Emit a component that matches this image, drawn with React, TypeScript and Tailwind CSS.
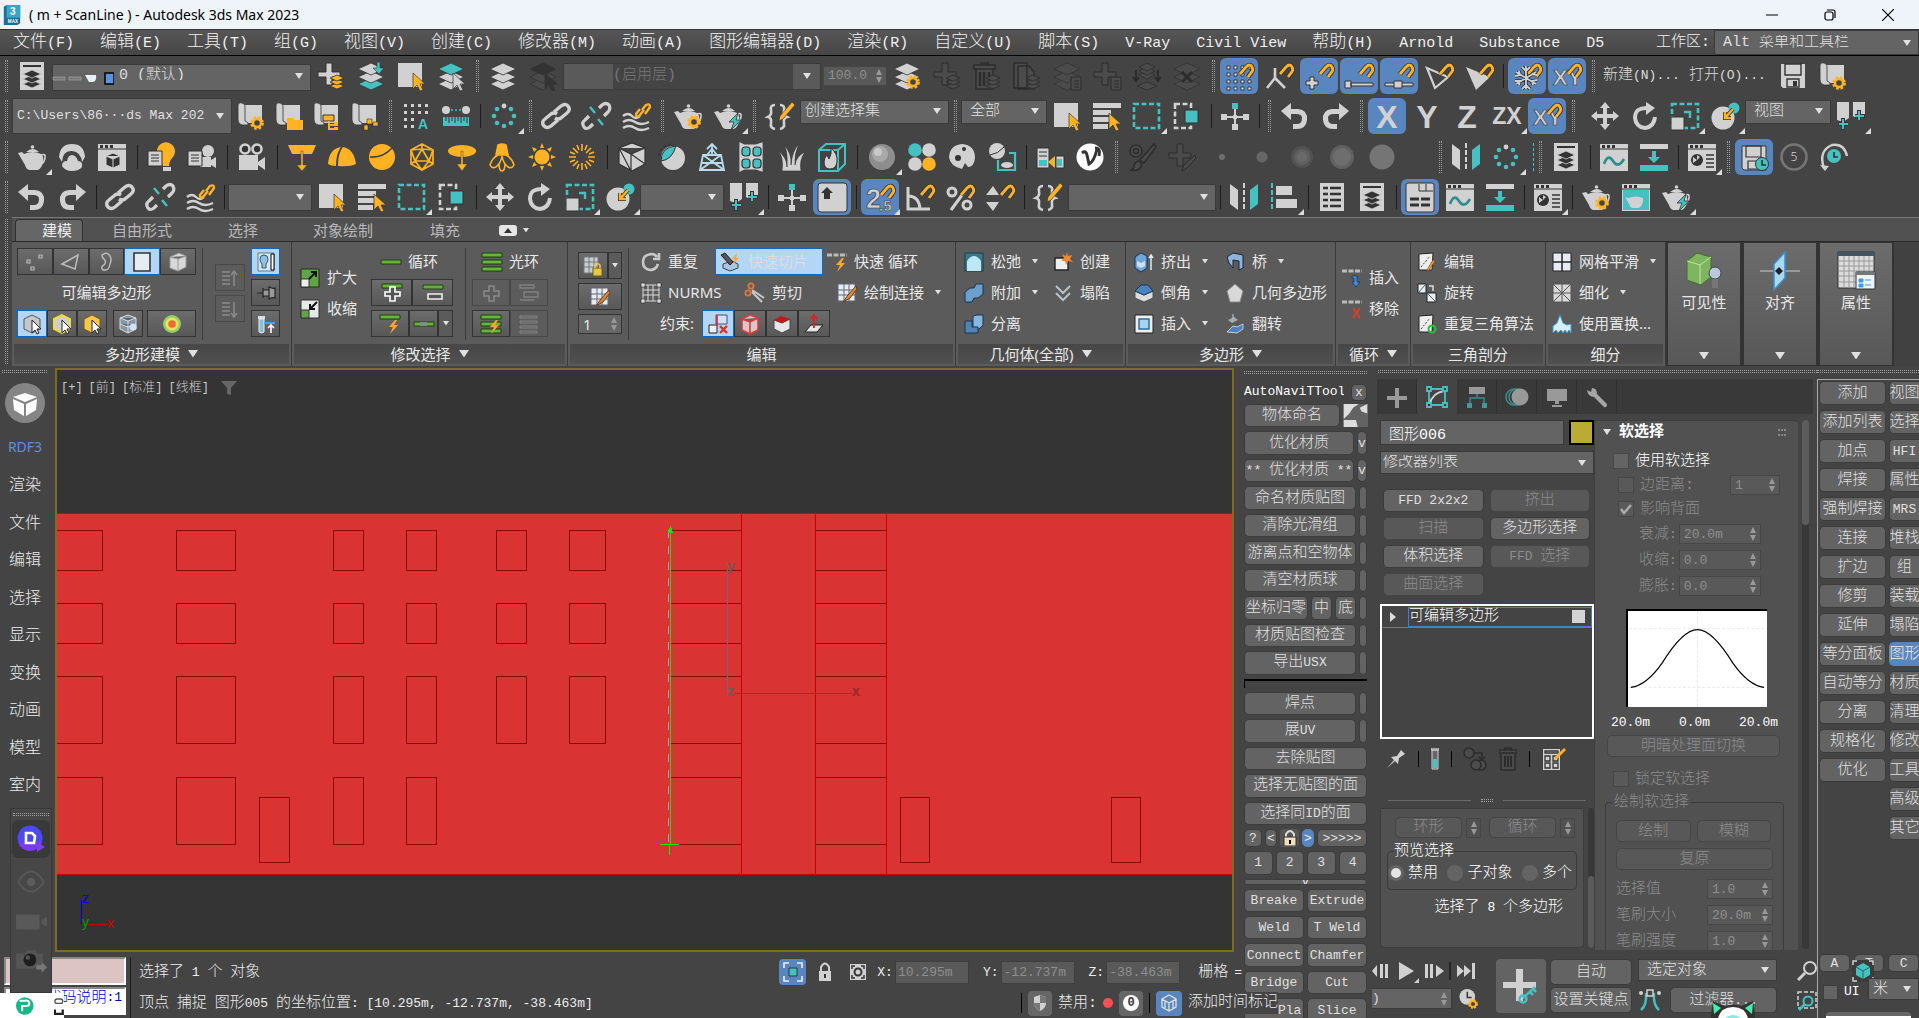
import { FC, ReactNode } from "react";

const G = "#d1d1d1";
const C = "#45c1c1";
const O = "#ffb322";
const D = "#333333";

const dia = (cx: number, cy: number, rx: number, ry: number, fill: string, stroke = D) => (
  <path d={`M${cx - rx} ${cy}L${cx} ${cy - ry}L${cx + rx} ${cy}L${cx} ${cy + ry}Z`} fill={fill} stroke={stroke} strokeWidth="0.8" />
);

const gear = (cx: number, cy: number, r = 4) => (
  <g>
    <circle cx={cx} cy={cy} r={r + 1.4} fill="none" stroke={O} strokeWidth="3" strokeDasharray="2.4 1.9" />
    <circle cx={cx} cy={cy} r={r} fill="#444" stroke={O} strokeWidth="2.4" />
  </g>
);

const stack = (fills: string[]) => (
  <g>
    {dia(14, 22, 13, 6, fills[2])}
    {dia(14, 15, 13, 6, fills[1])}
    {dia(14, 7, 13, 6, fills[0])}
  </g>
);

const miniStack = (fill: string, stroke: string) => (
  <g>
    {dia(20, 24, 7, 3, fill, stroke)}
    {dia(20, 20, 7, 3, fill, stroke)}
    {dia(20, 16, 7, 3, fill, stroke)}
  </g>
);

const plus = (fill: string, stroke: string) => (
  <path d="M9 1h6v9h8v5h-8v8H9v-8H1v-5h8z" fill={fill} stroke={stroke} strokeWidth="1" />
);

const cursor = (fill: string) => <path d="M16 11l12 11h-5l3 6-3 1-3-6-4 4z" fill={fill} stroke={D} strokeWidth="0.7" />;

const magnet = (
  <g fill="none">
    <path d="M15 12l6-7q4-4 6 0q2 3-1 6l-3 4" stroke={D} strokeWidth="4.6" />
    <path d="M15 12l6-7q4-4 6 0q2 3-1 6l-3 4" stroke={O} strokeWidth="2.8" />
  </g>
);

const pot = (
  <g fill={G}>
    <path d="M6 11q9-4 17 0q3 2 2 8q-1 6-5 8H11q-3-1-4-5L0 10l4-1z" />
    <path d="M8 9q7-6 13 0z" />
    <circle cx="14.500" cy="4" r="1.800" />
    <path d="M23 12q5-2 4 3q-1 5-4 6" fill="none" stroke={G} strokeWidth="1.600" />
  </g>
);

const bolt = <path d="M24 11l-9 9h5l-3 8 10-10h-5z" fill={C} stroke={D} strokeWidth="0.800" />;

const chain = (c = G) => (
  <g fill="none" stroke={c} strokeWidth="3.400">
    <path d="M12 10l7-6q4-3 7 0q3 4-1 7l-6 5q-3 2-6 0" />
    <path d="M16 18l-7 6q-4 3-7 0q-3-4 1-7l6-5q3-2 6 0" />
  </g>
);

const scroll = (
  <g>
    <path d="M8 3h17v18H8z" fill={G} />
    <path d="M1 4q0-4 4-3t3 4v14q4 1 3 4H5q-4-1-4-5z" fill={G} stroke={D} strokeWidth="0.800" />
  </g>
);

const braces = (
  <g>
    <path d="M9 3Q4 3 5 8T2 15Q6 16 5 21T9 27M14 3q5 0 4 5t3 7q-4 1-3 6t-4 6" fill="none" stroke={G} strokeWidth="2.600" />
    <path d="M26 0l3 3-12 14-4 2 1-5z" fill={O} stroke={D} strokeWidth="0.600" />
  </g>
);

const win = (
  <g>
    <path d="M0 1h28v27H0z" fill={G} />
    <path d="M0 6h28" stroke={D} strokeWidth="1" />
    <path d="M2 2h3v3H2zM7 2h3v3H7zM12 2h3v3h-3z" fill={D} />
  </g>
);

const ballRing = (
  <g fill={C}>
    <circle cx="14" cy="4" r="2.400" fill={G} />
    <circle cx="21" cy="7" r="2.300" />
    <circle cx="24" cy="14" r="2.300" />
    <circle cx="21" cy="21" r="2.300" />
    <circle cx="14" cy="24" r="2.300" />
    <circle cx="7" cy="21" r="2.300" />
    <circle cx="4" cy="14" r="2.300" />
    <circle cx="7" cy="7" r="2.300" />
  </g>
);

const waves = (
  <g>
    <path d="M1 14q5-4 9 0t8 0M1 20q6-4 12 0t14 0M1 26q6-4 12 0t14 0" fill="none" stroke={G} strokeWidth="2.400" />
    <path d="M20 8l4-5q4-2 4 2l-5 7M22 8l-5 6q-3 2-3-2l4-5" fill="none" stroke={O} strokeWidth="2.400" />
  </g>
);

const off = "#4b4b4b";
const offL = "#2c2c2c";

const axis = (t: string, size = 32) => (
  <text x="14" y={size > 30 ? 26 : 22} textAnchor="middle" fontSize={size} fontWeight="700" fontFamily="'Liberation Sans Narrow','Liberation Sans'" fill={G}>{t}</text>
);

const ICONS: Record<string, ReactNode> = {
  layerPanel: (
    <g>
      <path d="M2 0h24v28H2z" fill={G} />
      <path d="M5 3h18v2H5z" fill={D} />
      {dia(14, 22, 9, 4, D, G)}
      {dia(14, 17, 9, 4, D, G)}
      {dia(14, 12, 9, 4, D, G)}
    </g>
  ),
  addLayer: <g>{plus(G, D)}{miniStack(O, D)}</g>,
  layerDown: <g>{stack([G, G, C])}<path d="M20 0h3v6h4l-5 6-6-6h4z" fill={C} stroke={D} strokeWidth="0.600" /></g>,
  select: <g><path d="M1 1h24v24H1z" fill={G} />{cursor(O)}</g>,
  layerSel: <g>{stack([C, G, G])}{cursor(G)}</g>,
  layers: stack([G, G, G]),
  layersOff: <g>{stack(["#333", off, off])}{cursor("#333")}</g>,
  layerGear: <g>{stack([G, G, G])}{gear(20, 20)}</g>,
  plusOff: <g>{plus(off, offL)}{miniStack(off, offL)}</g>,
  trashOff: (
    <g fill={off} stroke={offL} strokeWidth="1.500">
      <path d="M3 7h17v20H3zM1 3h21v4H1zM8 1h7v2H8z" />
      <path d="M7 10v14M11 10v14M16 10v14" strokeWidth="2.500" />
      {miniStack(off, offL)}
    </g>
  ),
  docOff: <g fill={off} stroke={offL} strokeWidth="1.500"><path d="M1 1h13v25H1zM5 4h11l5 6v17H5z" />{miniStack(off, offL)}</g>,
  stackOff: <g>{stack([off, off, off])}<path d="M18 15h10v13H18zM21 19h5M21 22h5M21 25h5" fill={off} stroke={offL} /></g>,
  plusDocOff: <g>{plus(off, offL)}<path d="M18 15h10v13H18zM21 19h5M21 22h5M21 25h5" fill={off} stroke={offL} /></g>,
  splitOff: (
    <g>
      {dia(14, 24, 10, 4, off, offL)}
      {dia(14, 13, 8, 4, off, offL)}
      {dia(14, 9, 8, 4, off, offL)}
      {dia(14, 5, 8, 4, off, offL)}
      <path d="M3 8v10M0 15l3 4 3-4M25 8v10M22 15l3 4 3-4" stroke={offL} fill="none" strokeWidth="2" />
    </g>
  ),
  crossOff: <g>{stack([off, off, off])}<path d="M9 10l10 10M19 10L9 20" stroke={offL} strokeWidth="3" /></g>,
  snapGrid: (
    <g>
      <g fill="#fff" stroke={D} strokeWidth="1">
        {[5, 12, 19, 26].map((y) => [2, 9, 16, 23].map((x) => <path key={`${x}-${y}`} d={`M${x} ${y - 1}h3v3h-3z`} />))}
      </g>
      {magnet}
    </g>
  ),
  snapPivot: <g><path d="M10 6v10L2 26M10 16l10 10" stroke={G} strokeWidth="2.600" fill="none" />{magnet}</g>,
  snapPlus: <g><path d="M5 15h4v4h4v4H9v4H5v-4H1v-4h4z" fill={G} stroke={D} />{magnet}</g>,
  snapEnd: <g><path d="M0 19h6v7H0zM6 21h22v3H6z" fill={G} stroke={D} />{magnet}</g>,
  snapMid: <g><path d="M0 21h28v3H0z" fill={G} stroke={D} /><path d="M9 19h8v7H9z" fill={G} stroke={D} />{magnet}</g>,
  snapFace: <g><path d="M2 6l8 20 13-11z" stroke={G} strokeWidth="2.200" fill="none" />{magnet}</g>,
  snapFaceFull: <g><path d="M1 5l10 23 14-13z" fill={G} />{magnet}</g>,
  snow: (
    <g>
      {magnet}
      <path d="M13 4v23M3 10l20 12M23 10L3 22M9 5l4 4 4-4M9 27l4-4 4 4M2 14l5-1-1-4M24 18l-5 1 1 4M24 13l-5-1M2 19l5 0-1 4" stroke={D} strokeWidth="3.600" fill="none" />
      <path d="M13 4v23M3 10l20 12M23 10L3 22M9 5l4 4 4-4M9 27l4-4 4 4M2 14l5-1-1-4M24 18l-5 1 1 4M24 13l-5-1M2 19l5 0-1 4" stroke={G} strokeWidth="1.800" fill="none" />
    </g>
  ),
  xySnap: (
    <g>
      <text x="0" y="23" fontSize="22" fontWeight="700" fontFamily="'Liberation Sans Narrow','Liberation Sans'" fill={G} stroke={D} strokeWidth="0.600">XY</text>
      {magnet}
    </g>
  ),
  save: (
    <g>
      <path d="M2 2h24v24H4l-2-2z" fill={G} />
      <path d="M6 2h16v11H6zM8 17h12v8H8z" fill="none" stroke={D} strokeWidth="1.400" />
      <path d="M14 19h4v5h-4z" fill={D} />
    </g>
  ),
  scriptGear: <g>{scroll}{gear(20, 21)}</g>,
  scriptFolder: <g>{scroll}<path d="M12 16h6l2 2h8v10H12z" fill={O} /></g>,
  scriptTree: <g>{scroll}<path d="M10 13h11v6H10z" fill={O} stroke={D} /><path d="M16 19v8h6M16 23h6" stroke={O} strokeWidth="2" fill="none" /><path d="M21 20h4v4h-4zM21 25h4v3h-4z" fill={O} /></g>,
  scriptNodes: <g>{scroll}<path d="M16 17h5v5h-5zM22 20h5v4h-5zM13 23h4v5h-4z" fill={O} stroke={D} strokeWidth="0.600" /></g>,
  gridA: (
    <g>
      <g fill={G}>
        {[2, 9, 16, 23].map((y) => [2, 9, 16, 23].filter((x) => y < 16 || x < 16).map((x) => <path key={`${x}-${y}`} d={`M${x} ${y}h3v3h-3z`} />))}
      </g>
      <text x="16" y="27" fontSize="14" fontWeight="700" fontFamily="Liberation Sans" fill={C}>A</text>
    </g>
  ),
  ruler: (
    <g>
      <circle cx="4" cy="8" r="4" fill={G} />
      <circle cx="24" cy="8" r="4" fill={G} />
      <path d="M9 8h10" stroke={C} strokeWidth="1.500" strokeDasharray="2 2" />
      <path d="M1 15h26v9H1z" fill={C} />
      <path d="M4 15v4M7 15v6M10 15v4M13 15v6M16 15v4M19 15v6M22 15v4M25 15v6" stroke={D} />
    </g>
  ),
  ballRing,
  link: chain(),
  unlink: (
    <g fill="none" stroke={G} strokeWidth="3.200">
      <path d="M17 6l3-3q4-3 7 0q2 4-1 7l-4 4M11 22l-3 3q-4 3-6 0q-3-4 1-7l4-4" />
      <path d="M8 5l5 6M16 17l5 6" stroke={C} strokeWidth="2.400" />
    </g>
  ),
  waves,
  potGear: <g>{pot}{gear(20, 20)}</g>,
  potBolt: <g>{pot}{bolt}</g>,
  pot,
  braces,
  selectName: <g fill={G}><path d="M0 1h28v5H0zM0 8h18v5H0zM0 15h16v5H0zM0 22h15v5H0z" />{cursor(O)}</g>,
  region: <path d="M1 2h25v24H1z" fill="none" stroke={C} strokeWidth="2.600" strokeDasharray="5 2.500" />,
  windowSel: <g><path d="M2 2h16v24H2z" fill="none" stroke={G} strokeWidth="2.600" strokeDasharray="5 2.500" /><path d="M12 8h13v13H12z" fill={C} stroke={D} /></g>,
  nodes: <g><path d="M14 4v22M3 15h22" stroke={G} strokeWidth="2" /><path d="M11 1h6v6h-6z" fill={C} /><path d="M11 22h6v6h-6zM0 12h6v6H0zM22 12h6v6h-6zM12 13h4v4h-4z" fill={G} /></g>,
  undo: <path d="M0 9l10-8v6h7q10 1 9 11q-1 9-10 9h-4v-5h4q5 0 5-6q0-4-6-4h-5v6z" fill={G} />,
  redo: <path d="M28 9L18 1v6h-7Q1 8 2 18q1 9 10 9h4v-5h-4q-5 0-5-6q0-4 6-4h5v6z" fill={G} />,
  axisX: axis("X"),
  axisY: axis("Y"),
  axisZ: axis("Z"),
  axisZX: axis("ZX", 23),
  move: <path d="M14 0l5 6h-3v6h6V9l6 5-6 5v-3h-6v6h3l-5 6-5-6h3v-6H6v3l-6-5 6-5v3h6V6H9z" fill={G} />,
  rotate: <g><path d="M17 6Q4 5 4 16q1 9 10 10q9-1 10-11" fill="none" stroke={G} strokeWidth="4" /><path d="M15 0l9 6-9 7z" fill={G} /></g>,
  scale: <g><path d="M1 2h26v24H1z" fill="none" stroke={C} strokeWidth="2.600" strokeDasharray="5 2.500" /><path d="M0 15h13v13H0z" fill={G} stroke={D} /><path d="M13 10h6v6" fill="none" stroke={C} strokeWidth="2.400" /></g>,
  place: <g><circle cx="12" cy="16" r="11.500" fill={G} /><circle cx="23" cy="6" r="5.500" fill={C} /><path d="M22 7l-8 9M14 10v6h6" stroke={D} strokeWidth="4" fill="none" /><path d="M22 7l-8 9M14 10v6h6" stroke={O} strokeWidth="2.400" fill="none" /></g>,
  pivot: <g><path d="M0 0h12v16l-6 4-6-2zM16 0h12v12l-5 6-7-4z" fill={G} /><path d="M6 16v12M1 22h10M22 8v10M18 14h10" stroke={D} strokeWidth="4" /><path d="M6 17v10M2 22h9M22 9v9M18 14h9" stroke={C} strokeWidth="2" /></g>,
  cloth: <g fill={G}><path d="M1 14Q2 1 14 1T27 14l-3 5Q23 9 14 8T4 19z" /><path d="M4 23q0-5 5-5q1-6 5-6t6 6q5 0 4 6q-3 4-10 4T4 23z" /></g>,
  winCube: <g>{win}<path d="M8 13l7-3 7 3v9l-7 3-7-3zM8 13l7 3 7-3M15 16v9" fill={D} stroke={G} /></g>,
  lampList: <g><path d="M9 9a9 9 0 1 1 16 5q-4 4-4 9h-6z" fill={O} /><path d="M15 24h8v4h-8z" fill={G} /><path d="M0 8h14v15H0z" fill={G} stroke={D} /><path d="M3 12h8M3 15h8M3 18h8" stroke={D} /></g>,
  camList: <g><circle cx="20" cy="8" r="6" fill={G} /><path d="M12 14h11v10H12zM23 17l5-3v11l-5-3z" fill={G} /><path d="M0 8h14v15H0z" fill={G} stroke={D} /><path d="M3 12h8M3 15h8M3 18h8" stroke={D} /></g>,
  camera: <g><path d="M1 12h19v15H1zM20 19l7-5v13l-7-5z" fill={G} /><circle cx="7" cy="6" r="4.500" fill={D} stroke={G} strokeWidth="2.600" /><circle cx="19" cy="6" r="4.500" fill={D} stroke={G} strokeWidth="2.600" /></g>,
  lightSpot: <g fill={O}><path d="M0 2h28l-4 9H4z" /><path d="M13 8h2v14h4l-5 6-5-6h4z" stroke="#444" strokeWidth="0.500" /></g>,
  dome: <g fill={O}><path d="M0 21Q1 6 13 4Q8 10 8 23Q3 23 0 21zM10 23Q10 10 15 4q11 2 13 17q-6 3-18 2z" /></g>,
  sphere: <g><circle cx="14" cy="14" r="13" fill={O} /><path d="M2 14Q15 15 24 5" stroke="#444" strokeWidth="1.600" fill="none" /></g>,
  ico: <path d="M14 1l11 6v14l-11 6-11-6V7zM14 6L7 18h14zM14 1v5M3 7l4 11-4 3M25 7l-4 11 4 3M7 18l7 9 7-9M3 7l11-1 11 1" fill="none" stroke={O} strokeWidth="1.700" />,
  disc: <g fill={O}><ellipse cx="14" cy="8" rx="14" ry="6" /><path d="M13 8h2v13h4l-5 7-5-7h4z" stroke="#444" strokeWidth="0.500" /></g>,
  fly: <g fill="none" stroke={O} strokeWidth="1.600"><path d="M10 2q4-2 8 0l2 10H8z" fill={O} /><path d="M10 12q-6 3-8 10q2 4 6 2q5-4 6-11q1 7 6 11q4 2 6-2q-2-7-8-10M11 20q0 8 3 8t3-8" /></g>,
  sun: <g fill={O}><circle cx="14" cy="14" r="7.500" /><path d="M14 0l2 5h-4zM14 28l-2-5h4zM0 14l5-2v4zM28 14l-5 2v-4zM4 4l5 2-3 3zM24 24l-5-2 3-3zM24 4l-2 5-3-3zM4 24l2-5 3 3z" /></g>,
  rays: <path d="M14 1v7M14 20v7M1 14h7M20 14h7M5 5l5 5M18 18l5 5M23 5l-5 5M10 18l-5 5M9 2l2 5M19 2l-2 5M9 26l2-5M19 26l-2-5M2 9l5 2M26 9l-5 2M2 19l5-2M26 19l-5-2" stroke={O} strokeWidth="1.600" />,
  box: <path d="M1 5l13-5 13 5v16l-13 7-13-7zM1 5l12 6 14-6M13 11v17M1 5l12 23M13 11l14 10" fill={G} stroke={D} strokeWidth="1.200" />,
  eggLeaf: <g><circle cx="15" cy="15" r="12" fill={G} /><path d="M3 18Q3 4 18 3Q14 17 3 18z" fill={C} stroke={D} /><path d="M1 13Q2 2 15 1" fill="none" stroke={D} strokeDasharray="3 2" strokeWidth="1.500" /></g>,
  derrick: <path d="M14 1v11M9 6l5-5 5 5M5 12h18l3 15H2zM5 12l21 15M23 12L2 27M9 12l5-6 5 6M4 20h20" fill="none" stroke="#b9dcec" strokeWidth="1.800" />,
  facade: <g fill={C} stroke={D} strokeWidth="1.200"><path d="M2 0l4 2h12l6-2v28l-6-2H6l-4 2z" fill={G} stroke={G} /><rect x="4" y="4" width="8" height="9" rx="3" /><rect x="15" y="4" width="8" height="9" rx="3" /><rect x="4" y="16" width="8" height="9" rx="3" /><rect x="15" y="16" width="8" height="9" rx="3" /></g>,
  grass: <path d="M4 28Q6 14 0 8q9 6 9 16Q10 8 6 2q8 8 7 20Q14 8 21 1q-5 10-4 21q1-9 10-13q-6 8-4 19z" fill={G} stroke={D} strokeWidth="0.600" />,
  fire: <g><path d="M1 7l7-6h19v20l-7 7H1zM1 7h19l7-6M20 7v21" fill="none" stroke={C} strokeWidth="2" /><path d="M13 5q7 6 6 14q-1 7-7 7t-6-7q0-4 3-7l2 4q3-5 2-11z" fill={G} stroke={D} /></g>,
  material: <g><circle cx="14" cy="14" r="13" fill="#8d8d8d" /><circle cx="12" cy="11" r="8" fill="#a8a8a8" /><circle cx="10" cy="9" r="4" fill="#c9c9c9" /></g>,
  balls: <g><circle cx="7" cy="7" r="6.800" fill={C} /><circle cx="21" cy="7" r="6.800" fill={G} /><circle cx="7" cy="21" r="6.800" fill={G} /><circle cx="21" cy="21" r="6.800" fill={O} /></g>,
  mask: <g><path d="M14 1q13 1 13 14q-1 9-7 9l-3-4-3 6Q2 23 1 14Q2 2 14 1z" fill={G} /><circle cx="10" cy="15" r="3" fill={D} /><circle cx="16" cy="6" r="2" fill={D} /></g>,
  matLink: <g><circle cx="9" cy="8" r="8" fill={G} /><path d="M2 12Q10 11 16 4" stroke={D} fill="none" /><path d="M10 17v10h17V10h-6" fill="none" stroke={C} strokeWidth="2.200" /><ellipse cx="19" cy="22" rx="6" ry="3" fill={G} /></g>,
  convert: <g><path d="M1 5h12v20H1zM20 13h8v12h-8z" fill={G} stroke={D} /><path d="M3 9h8M3 13h8" stroke={D} /><path d="M3 17h8v6H3zM21 16h5v7h-5z" fill={C} /><path d="M12 19l7-6v12z" fill={O} /></g>,
  vray: <g><circle cx="14" cy="14" r="13.500" fill="#fff" /><path d="M6 10q4-3 5 2l2 9q5-2 8-15M19 5q6 0 4 8" stroke={D} strokeWidth="3" fill="none" /></g>,
  brushOff: <g fill={off} stroke={offL} strokeWidth="1.500"><circle cx="8" cy="8" r="6" /><circle cx="8" cy="8" r="2.500" /><path d="M26 1l2 3-12 16-4-3zM10 18q5 2 3 6q-4 5-10 3q3-1 3-4t4-5z" /></g>,
  plusBrushOff: <g>{plus(off, offL)}<path d="M27 12l1 3-9 10-5 3 2-6z" fill={off} stroke={offL} /></g>,
  dot1: <circle cx="14" cy="14" r="3" fill="#6e6e6e" />,
  dot2: <circle cx="14" cy="14" r="5.500" fill="#666" />,
  dot3: <g><circle cx="14" cy="14" r="11" fill="#525252" /><circle cx="14" cy="14" r="8" fill="#606060" /><circle cx="14" cy="14" r="5" fill="#6a6a6a" /></g>,
  dot4: <g><circle cx="14" cy="14" r="12" fill="#606060" /><circle cx="14" cy="14" r="9" fill="#6e6e6e" /></g>,
  dot5: <circle cx="14" cy="14" r="12.500" fill="#757575" />,
  mirror: <g><path d="M0 1l8 6v20l-8-6z" fill={G} /><path d="M28 1l-8 6v20l8-6z" fill={C} /><path d="M14 0v28" stroke={G} strokeWidth="2" strokeDasharray="5 2" /></g>,
  alignL: <g><path d="M2 0v28" stroke={C} strokeWidth="2" strokeDasharray="5 2" /><path d="M6 3h16v9H6zM6 16h21v9H6z" fill={G} /></g>,
  curveWin: <g>{win}<path d="M4 21q4-11 9-3t11-2" fill="none" stroke="#2c8d8d" strokeWidth="2.600" /></g>,
  dopeWin: <g><path d="M0 1h28v5H0z" fill={G} /><path d="M0 22h28v6H0z" fill={C} /><path d="M12 8h4v6h4l-6 6-6-6h4z" fill={C} /></g>,
  matWin: <g>{win}<circle cx="9" cy="17" r="6" fill={D} /><path d="M5 14l4 3-4 3zM9 12l3 2-3 3zM9 17l4 3" fill={G} /><path d="M18 12h8M18 16h8M18 20h8M18 24h8" stroke={D} strokeWidth="1.600" /></g>,
  saveClock: <g><path d="M2 3h24v24H4l-2-2z" fill={G} stroke={D} /><path d="M6 3h15v11H6zM8 18h10v8H8z" fill="none" stroke={D} strokeWidth="1.200" /><circle cx="22" cy="21" r="6.500" fill={C} stroke={D} /><path d="M22 17v5h4" stroke={D} strokeWidth="1.600" fill="none" /></g>,
  five: <g><circle cx="14" cy="14" r="12.500" fill="none" stroke="#777" strokeWidth="2.600" /><text x="14" y="18" textAnchor="middle" fontSize="12" fontFamily="Noto Sans" fill={G}>5</text></g>,
  clockArc: <g><path d="M4 25Q-2 8 12 2Q24 0 27 13" fill="none" stroke={G} strokeWidth="2.400" /><circle cx="14" cy="13" r="7" fill={C} /><path d="M14 9v5h4" stroke={D} strokeWidth="1.600" fill="none" /><path d="M0 22l5 6 4-5z" fill={G} /></g>,
  keyOver: <g><rect x="0" y="0" width="29" height="29" rx="3" fill={G} stroke={D} /><path d="M9 4l6 6h-3v6H6v-6H3z" fill={D} /></g>,
  snap25: <g><text x="0" y="25" fontSize="27" fontWeight="700" fontFamily="Liberation Sans" fill={G} stroke={D} strokeWidth="0.600">2</text><text x="13" y="28" fontSize="15" fontWeight="700" fontFamily="Liberation Sans" fill={G} stroke={D} strokeWidth="0.500">.5</text>{magnet}</g>,
  snapAngle: <g><path d="M2 4v22h22M2 13q11 0 12 13" stroke={G} strokeWidth="3" fill="none" />{magnet}</g>,
  snapPct: <g><circle cx="6" cy="9" r="4" fill="none" stroke={G} strokeWidth="3" /><circle cx="21" cy="22" r="4" fill="none" stroke={G} strokeWidth="3" /><path d="M22 4L5 27" stroke={G} strokeWidth="3" />{magnet}</g>,
  snapSpin: <g><path d="M7 3l6 9H0zM7 28l6-9H0z" fill={G} />{magnet}</g>,
  listPanel: <g><path d="M2 0h24v28H2z" fill={G} /><path d="M5 5h5M12 5h11M5 11h5M12 11h11M5 17h5M12 17h11M5 23h5M12 23h11" stroke={D} strokeWidth="2.400" /></g>,
  ribbonWin: <g><rect x="0" y="0" width="28" height="29" rx="2" fill={G} stroke={D} /><path d="M13 1v7h14M20 1v7" fill="none" stroke={D} /><path d="M4 16h9M15 16h9M4 22h9M15 22h9" stroke={D} strokeWidth="3" /></g>,
  potWin: <g>{win}<path d="M1 7h26v20H1z" fill={C} /><path d="M6 15q8-3 15 0q1 6-4 10H10q-2-1-3-4l-4-7z" fill={G} /></g>,
};

const Icon: FC<{ name: string; className?: string }> = ({ name, className = "size-7" }) => (
  <svg viewBox="0 0 28 28" className={`${className} shrink-0 overflow-visible`} aria-hidden="true">
    {ICONS[name]}
  </svg>
);

const CJK = "font-['Liberation_Mono','Noto_Sans_CJK_SC',monospace] font-light";

// Splits a label so that its Latin runs are set one step smaller than its Chinese ones.
const Mix: FC<{ t: string; latin?: string }> = ({ t, latin = "text-[13px]" }) => (
  <>
    {t.split(/([\x20-\x7e]+)/).map((s, i) =>
      i % 2 ? <span key={i} className={latin}>{s}</span> : s
    )}
  </>
);

const Caret: FC<{ className?: string }> = ({ className = "w-2" }) => (
  <svg viewBox="0 0 8 6" className={`${className} shrink-0`} aria-hidden="true"><path d="M0 0h8L4 6z" fill="#e0e0e0" /></svg>
);

const Combo: FC<{ label: string; value: string; className: string; text?: string }> = ({ label, value, className, text = "pl-2 text-[15px]" }) => (
  <div className={`relative shrink-0 ${className}`}>
    <select aria-label={label} className={`h-full w-full appearance-none border border-[#3a3a3a] bg-[#646464] pr-6 text-[#e0e0e0] ${text}`}>
      <option>{value}</option>
    </select>
    <span className="pointer-events-none absolute inset-y-0 right-2 flex items-center"><Caret /></span>
  </div>
);

const Arrows = () => (
  <svg viewBox="0 0 6 14" className="h-3.5 w-1.5 shrink-0" aria-hidden="true"><path d="M0 6l3-6 3 6zM0 8l3 6 3-6z" fill="#999" /></svg>
);

const Spin: FC<{ label: string; value: string; className: string }> = ({ label, value, className }) => (
  <div className={`flex h-5 items-center border border-[#464646] bg-[#595959] pr-1 ${className}`}>
    <input aria-label={label} defaultValue={value} className="w-full min-w-0 bg-transparent pl-1 text-[13px] text-[#8f8f8f] outline-none" />
    <Arrows />
  </div>
);

const Btn: FC<{ t: string; className?: string; dim?: boolean; on?: boolean }> = ({ t, className = "", dim, on }) => (
  <button
    className={`flex min-w-0 items-center justify-center overflow-hidden whitespace-nowrap rounded-[5px] border leading-none ${
      on ? "border-[#5a83b8] bg-[#5a86c0] text-[#eee]" : dim ? "border-[#454545] bg-[#585858] text-[#8c8c8c]" : "border-[#3c3c3c] bg-[#636363] text-[#e0e0e0]"
    } ${className}`}
  >
    <span><Mix t={t} /></span>
  </button>
);

const Grip: FC<{ tall?: boolean }> = ({ tall }) => (
  <span className="flex w-3 shrink-0 justify-center">
    <span className={`w-[3px] border-x border-dotted border-[#9a9a9a] ${tall ? "my-0.5 h-auto" : "h-8"}`} />
  </span>
);
const GripH: FC<{ className?: string }> = ({ className = "" }) => <div className={`h-[3px] border-y border-dotted border-[#a0a0a0] ${className}`} />;

// "|" is a grip, "/" a separator, "!" a dashed guide, "-" and "_" gaps,
// "*" marks a lit button and "+" one with a flyout.
const Tools: FC<{ items: string; tight?: boolean }> = ({ items, tight }) => (
  <>
    {items.split(" ").map((raw, i) => {
      if (raw === "|") return <Grip key={i} />;
      if (raw === "_") return <span key={i} className="w-8 shrink-0" />;
      if (raw === "-") return <span key={i} className="w-1.5 shrink-0" />;
      if (raw === "!") return <span key={i} className="flex w-2 shrink-0 justify-end"><span className="h-7 border-l border-dashed border-[#45c1c1]" /></span>;
      if (raw === "/" || raw === "//")
        return <span key={i} className={`flex shrink-0 justify-center ${raw === "/" ? "w-2" : "w-[10px]"}`}><span className="h-6 w-px bg-[#1d1d1d]" /></span>;
      const name = raw.replace(/[*+]/g, "");
      return (
        <button key={i} aria-label={name} className={`relative flex shrink-0 items-center justify-center ${tight ? "w-[38px]" : "w-10"}`}>
          <span className={`flex h-9 w-[38px] items-center justify-center rounded-md ${raw.includes("*") ? "bg-[#5a86c0]" : ""}`}>
            <Icon name={name} />
          </span>
          {raw.includes("+") && (
            <svg viewBox="0 0 6 6" className="absolute bottom-0 right-0 size-1.5"><path d="M6 0v6H0z" fill="#ddd" /></svg>
          )}
        </button>
      );
    })}
  </>
);

const MENUS = ["文件(F)", "编辑(E)", "工具(T)", "组(G)", "视图(V)", "创建(C)", "修改器(M)", "动画(A)", "图形编辑器(D)", "渲染(R)", "自定义(U)", "脚本(S)", "V-Ray", "Civil View", "帮助(H)", "Arnold", "Substance", "D5"];

const Header = () => (
  <header>
    <div className="flex h-[29px] items-center bg-[#eef4f9] pl-[3px] text-black">
      <svg viewBox="0 0 18 22" className="mr-2 h-5 w-[18px]">
        <path d="M0 2l3-2h15v20l-3 2H0z" fill="#1b6f96" /><path d="M3 0h15v14H3z" fill="#37a5cc" />
        <text x="10" y="11" textAnchor="middle" fontSize="11" fontWeight="700" fontFamily="Liberation Sans" fill="#fff">3</text>
        <text x="10" y="20" textAnchor="middle" fontSize="5" fontWeight="700" fontFamily="Liberation Sans" fill="#fff">MAX</text>
      </svg>
      <h1 className="flex-1 font-['Noto_Sans',sans-serif] text-sm font-normal">( m + ScanLine ) - Autodesk 3ds Max 2023</h1>
      <button aria-label="最小化" className="flex w-[58px] justify-center"><svg viewBox="0 0 12 12" className="size-3"><path d="M0 6h12" stroke="#000" /></svg></button>
      <button aria-label="还原" className="flex w-[58px] justify-center"><svg viewBox="0 0 12 12" className="size-3" fill="none" stroke="#000" strokeWidth="1.200"><rect x="1" y="3" width="8" height="8" rx="2" /><path d="M3 1h6q2 0 2 2v6" /></svg></button>
      <button aria-label="关闭" className="mr-0.5 flex w-[58px] justify-center"><svg viewBox="0 0 12 12" className="size-3"><path d="M0 0l12 12M12 0L0 12" stroke="#000" strokeWidth="1.200" /></svg></button>
    </div>
    <nav className="flex h-[27px] items-center gap-[26px] whitespace-nowrap border-b border-t border-b-black border-t-[#333] bg-gradient-to-b from-[#565656] to-[#464646] pl-[13px] text-[17px] leading-none text-[#f0f0f0]">
      {MENUS.map((m) => <button key={m} className="leading-none"><Mix t={m} latin="text-[15px]" /></button>)}
      <div className="ml-auto flex h-full items-center gap-1 text-[15px]">
        <span>工作区:</span>
        <Combo label="工作区" value="Alt 菜单和工具栏" className="h-[25px] w-[205px]" />
      </div>
    </nav>
  </header>
);

const ToolRows = () => (
  <div className="text-[#ddd]">
    <div className="flex h-10 items-center overflow-hidden">
      <Grip />
      <Tools items="layerPanel" />
      <div className="relative h-[27px] w-[259px] shrink-0">
        <select aria-label="层" className="h-full w-full appearance-none border border-[#3a3a3a] bg-[#646464] pb-2.5 pl-[66px] text-[15px]"><option>0 (默认)</option></select>
        <svg viewBox="0 0 62 16" className="pointer-events-none absolute left-0 top-1.5 h-4 w-[62px]">
          <path d="M1 8h12v3H1zM17 8h12v3H17z" fill="#777" stroke="#bbb" strokeWidth="0.500" />
          <path d="M35 6h9q1 6-3 7h-4l-4-7z" fill="#e8f0f4" /><path d="M53 4h9v11h-9z" fill="#5b93e0" stroke="#000" strokeWidth="1.500" />
        </svg>
        <span className="pointer-events-none absolute inset-y-0 right-2 flex items-center"><Caret /></span>
      </div>
      <Tools items="addLayer layerDown select layerSel | layers layersOff" />
      <div className="mr-0.5 flex h-[27px] w-[258px] shrink-0 items-center border border-[#3a3a3a] bg-[#5a5a5a]">
        <span className="flex-1 self-stretch" />
        <input aria-label="启用层" defaultValue="(启用层)" className="h-full w-[180px] bg-[#444] pb-1.5 text-[15px] text-[#777]" />
        <button aria-label="展开" className="flex w-[27px] justify-center"><Caret /></button>
      </div>
      <Spin label="权重" value="100.0" className="w-16 shrink-0" />
      <Tools items="layerGear plusOff trashOff docOff stackOff plusDocOff splitOff crossOff | *snapGrid snapPivot *snapPlus *snapEnd *snapMid snapFace snapFaceFull / *snow *xySnap |" />
      <button className="ml-1 w-[86px] shrink-0 text-left text-[15px]"><Mix t="新建(N)..." /></button>
      <button className="w-[84px] shrink-0 text-left text-[15px]"><Mix t="打开(O)..." /></button>
      <Tools items="save scriptGear" />
    </div>
    <div className="flex h-10 items-center overflow-hidden">
      <Grip />
      <Combo label="项目文件夹" value="C:\Users\86···ds Max 202:" className="h-9 w-[220px]" text="pl-1 text-[13px]" />
      <Tools tight items="scriptGear scriptFolder scriptTree scriptNodes" />
      <Tools items="| gridA ruler / +ballRing | link unlink waves | potGear +potBolt | braces" />
      <Combo label="创建选择集" value="创建选择集" className="mt-[3px] h-6 w-[149px] self-start" text="pl-1 text-[15px]" />
      <Grip />
      <Combo label="选择过滤器" value="全部" className="mt-[3px] h-6 w-[86px] self-start" />
      <Tools items="select selectName +region windowSel / nodes / | undo redo | *axisX axisY axisZ +axisZX *xySnap | - move rotate +scale +place" />
      <Combo label="参考坐标系" value="视图" className="mt-[3px] h-6 w-[86px] self-start" />
      <Tools items="+pivot" />
    </div>
    <div className="flex h-[41px] items-center overflow-hidden">
      <Grip />
      <Tools items="+pot cloth winCube // lampList camList // camera // lightSpot dome sphere ico disc fly sun rays // box eggLeaf derrick facade grass fire // +material balls mask matLink / convert vray | brushOff plusBrushOff dot1 dot2 dot3 dot4 dot5 _ | mirror +ballRing ! | layerPanel / curveWin dopeWin / +matWin | *saveClock five clockArc" />
    </div>
    <div className="flex h-10 items-center overflow-hidden">
      <Grip />
      <Tools items="undo redo / link unlink waves /" />
      <Combo label="选择过滤" value="" className="h-[27px] w-[84px]" />
      <Tools items="select selectName +region windowSel / move rotate +scale +place" />
      <Combo label="坐标系" value="" className="h-[27px] w-[84px]" />
      <Tools items="+pivot / nodes *keyOver / *+snap25 snapAngle snapPct snapSpin / braces" />
      <Combo label="命名选择集" value="" className="h-[27px] w-[148px]" />
      <Tools items="/ mirror +alignL / listPanel layerPanel / *ribbonWin curveWin dopeWin / +matWin / potGear potWin +potBolt" />
    </div>
  </div>
);

const green = (y: number) => <path key={y} d={`M0 ${y}h20v4H0z`} fill="#64b53a" stroke="#1e3d10" />;
const edge = (y: number, c = "#bbb") => <path d={`M0 ${y}h20`} stroke={c} strokeWidth="3" strokeDasharray="5 1.500" />;
const flash = <path d="M15 6l-6 7h4l-3 7 8-9h-4l3-5z" fill="#ffa62b" />;

const RICONS: Record<string, ReactNode> = {
  vertex: <g fill="none" stroke="#bbb" strokeWidth="1.200"><path d="M2 8h3v3H2zM14 3h3v3h-3zM6 15h3v3H6z" /></g>,
  edge: <path d="M1 12L17 3l-3 14z" fill="none" stroke="#bbb" strokeWidth="1.500" />,
  border: <path d="M6 3q5-4 8 1q2 4 0 8q-1 7-7 6q-3-3 1-5q3-3 0-6q-2-1-2-4z" fill="none" stroke="#bbb" strokeWidth="1.500" />,
  poly: <path d="M2 1h16v18H2z" fill="#e8ecf2" stroke="#333" strokeWidth="1.600" />,
  element: <path d="M2 5l9-4 7 3v11l-8 4-8-3zM2 5l8 2 8-3M10 7v12" fill="#d8d8d8" stroke="#999" />,
  cubeCur: <g><path d="M2 5l8-4 8 4v10l-8 4-8-4z" fill="#c4c8cc" stroke="#555" /><path d="M10 6l9 9h-4l2 4-2 1-2-4-3 3z" fill="#fff" stroke="#222" /></g>,
  cubeYel: <g><path d="M2 5l8-4 8 4v10l-8 4-8-4z" fill="#cfcfcf" stroke="#f2dc30" strokeWidth="2" /><path d="M10 6l9 9h-4l2 4-2 1-2-4-3 3z" fill="#fff" stroke="#222" /></g>,
  cubeGold: <g><path d="M2 5l8-4 8 4v10l-8 4-8-4z" fill="#f7c84a" stroke="#7a5a10" /><path d="M10 6l9 9h-4l2 4-2 1-2-4-3 3z" fill="#fff" stroke="#222" /></g>,
  cubeNet: <g><path d="M2 4l8-3 8 3v11l-8 4-8-4zM2 4l8 3 8-3M10 7v12M2 10l8 3 8-3" fill="#8497a8" stroke="#ddd" /><circle cx="15" cy="13" r="3.500" fill="#cfe2f7" /></g>,
  heat: <g><circle cx="10" cy="10" r="9" fill="#8ed06a" /><circle cx="10" cy="10" r="6.500" fill="#f2e15a" /><circle cx="10" cy="10" r="3.800" fill="#ef6a3a" /></g>,
  up: <path d="M2 4h8M2 8h8M2 12h8M2 16h8M14 18V4M11 7l3-4 3 4" stroke="#8a8a8a" strokeWidth="1.500" fill="none" />,
  down: <path d="M2 4h8M2 8h8M2 12h8M2 16h8M14 3v14M11 14l3 4 3-4" stroke="#8a8a8a" strokeWidth="1.500" fill="none" />,
  bulb: <g><path d="M2 1h16v18H2z" fill="#d6e8f8" stroke="#5b7a99" /><path d="M4 7a4 4 0 1 1 8 0q0 3-2 5v4H6v-4Q4 10 4 7z" fill="#8dc2e8" stroke="#456" /><path d="M15 2h3v16h-3z" fill="#fff" stroke="#000" /></g>,
  pin: <path d="M1 10h6M7 5v10M7 7h6v6H7M13 4q4 2 6 1v10q-2-1-6 1z" fill="#9a9a9a" stroke="#222" strokeWidth="1.200" />,
  tube: <g><path d="M2 2h7v3H2z" fill="#ddd" /><path d="M3 5h5v13q-2 2-5 0z" fill="#7fc4dc" stroke="#eee" /><path d="M8 9h11" stroke="#4aa3ff" strokeWidth="2" /><path d="M15 19v-7M12 14l3-3 3 3" stroke="#fff" strokeWidth="1.600" fill="none" /></g>,
  grow: <g><path d="M1 1h18v18H1z" fill="#63a347" stroke="#1f3315" /><path d="M1 11h8v8H1z" fill="#eee" stroke="#333" /><path d="M9 11l7-7M11 4h5v5" stroke="#111" strokeWidth="2" fill="none" /></g>,
  shrink: <g><path d="M1 1h18v18H1z" fill="#e8e8e8" stroke="#333" /><path d="M1 11h8v8H1z" fill="#63a347" stroke="#333" /><path d="M17 3l-7 7M10 5v5h5" stroke="#111" strokeWidth="2" fill="none" /></g>,
  loop: green(8),
  ring: <g>{[1, 8, 15].map(green)}</g>,
  loopPlus: <g>{green(1)}<path d="M8 4h5v5h5v4h-5v5H8v-5H3V9h5z" fill="#555" stroke="#fff" strokeWidth="1.600" /></g>,
  loopMinus: <g opacity="0.900">{green(2)}<path d="M5 11h14v5H5z" fill="#555" stroke="#fff" strokeWidth="1.600" /></g>,
  loopFlash: <g>{green(1)}{flash}</g>,
  loopDot: <g>{green(8)}<path d="M6 8h7v4H6z" fill="#888" /></g>,
  ringPlus: <path d="M8 3h5v5h5v5h-5v5H8v-5H3V8h5z" fill="none" stroke="#8a8a8a" strokeWidth="1.500" />,
  ringMinus: <path d="M1 2h14v3H1zM5 9h14v5H5zM1 17h14" fill="none" stroke="#808080" strokeWidth="1.500" />,
  ringFlash: <g>{[1, 8, 15].map(green)}{flash}</g>,
  ringOff: <path d="M1 2h17v2H1zM1 7h17v2H1zM1 12h17v2H1zM1 17h17v2H1z" fill="none" stroke="#858585" />,
  lock: <g><path d="M1 1h14v16H1zM1 6h14M1 11h14M6 1v16M11 1v16" fill="#c9ced4" stroke="#777" /><path d="M10 12h9v8h-9z" fill="#e5c84a" stroke="#6b5a10" /><path d="M12 12V9q2-3 5 0v3" fill="none" stroke="#e5c84a" strokeWidth="1.600" /></g>,
  paint: <g><path d="M1 1h17v17H1zM1 7h17M1 12h17M7 1v17M12 1v17" fill="#e6ecf2" stroke="#667" /><path d="M19 3l-8 9-5 7 7-4 7-9z" fill="#d8893a" stroke="#6b3d10" /></g>,
  redo: <path d="M17 12q-2 6-8 6q-7-1-7-8t8-8q4 0 6 3M18 1v6h-6" fill="none" stroke="#c8c8c8" strokeWidth="2.600" />,
  knife: <g><path d="M3 12l9-3 6 3v4l-8 3-7-3z" fill="#a8c8de" stroke="#345" /><path d="M1 3l4-2 8 9-3 3z" fill="#555" stroke="#222" /><path d="M17 1l-5 6h3l-2 5 6-6h-3z" fill="#ffa62b" /></g>,
  quickLoop: <g>{edge(3)}{flash}</g>,
  nurms: <g><path d="M2 2h16v16H2zM2 7h16M2 12h16M7 2v16M12 2v16" stroke="#ddd" fill="none" /><path d="M0 0h4v4H0zM16 0h4v4h-4zM0 16h4v4H0zM16 16h4v4h-4z" fill="#ddd" stroke="#222" strokeWidth="0.600" /></g>,
  cut: <g fill="none"><path d="M7 7l12 8M7 9l10 10" stroke="#c8c8c8" strokeWidth="2" /><circle cx="6" cy="3" r="2.600" stroke="#e0763a" strokeWidth="1.800" /><circle cx="3" cy="10" r="2.600" stroke="#e0763a" strokeWidth="1.800" /></g>,
  conNone: <g><path d="M8 1h11v9H8z" fill="#cfe2f7" stroke="#456" /><path d="M1 11h8v8H1z" fill="#eee" stroke="#222" /><path d="M9 1v11" stroke="#e02020" strokeWidth="1.600" /><path d="M12 12l7 7M19 12l-7 7" stroke="#e03020" strokeWidth="2.400" /></g>,
  conEdge: <path d="M2 5l8-4 8 3v12l-8 4-8-4zM2 5l8 3 8-4M10 8v12" fill="#d8c8c8" stroke="#e03838" strokeWidth="1.600" />,
  conFace: <g><path d="M2 6l8 3 8-4v10l-8 4-8-4z" fill="#e6e6e6" stroke="#444" /><path d="M2 6l7-4 9 3-8 4z" fill="#c01818" /></g>,
  conNorm: <g><path d="M1 18l6-7h12l-6 7z" fill="#e6e6e6" stroke="#222" /><path d="M10 14V3M7 5l3-4 3 4" stroke="#e02020" strokeWidth="1.800" fill="none" /></g>,
  relax: <g><path d="M1 1h18v18H1z" fill="#387a8c" stroke="#1d3d48" /><path d="M3 19V9q7-10 14 0v10z" fill="#bde7f7" /></g>,
  create: <g><path d="M2 6h13v12H2z" fill="#eee" stroke="#222" strokeWidth="1.400" /><path d="M14 0l1 4 4-1-2 4 3 3-5-1-2 4-1-4-4 0 3-3-2-4 4 2z" fill="#f08a2c" /></g>,
  attach: <path d="M1 9l5-4h4l2-4h7v10l-5 4h-4l-2 4H1z" fill="#6d9fcc" stroke="#1d3550" />,
  detach: <g><path d="M9 2l4-1h6v10l-4 4H9z" fill="#86b8e2" stroke="#1d3550" /><path d="M1 7h7v6h6v6H1z" fill="#4f83b5" stroke="#1d3550" /></g>,
  collapse: <path d="M3 3l7 7 7-7M3 10l7 7 7-7" fill="none" stroke="#b8c0c8" strokeWidth="2" />,
  extrude: <g><path d="M1 5l6-4 6 3v12l-6 4-6-4z" fill="#6ea6dc" stroke="#1d3550" /><path d="M3 9l4 2 4-2v5l-4 2-4-2z" fill="#cfe2f7" /><path d="M17 18V4M15 6l2-3 2 3" stroke="#eee" strokeWidth="1.400" fill="none" /></g>,
  bevel: <g><path d="M1 8l9 4 9-4v7l-9 4-9-4z" fill="#dcdcdc" stroke="#555" /><path d="M1 8l6-6h7l5 6-9 4z" fill="#4a83c0" stroke="#1d3550" /></g>,
  inset: <g><path d="M1 1h18v18H1z" fill="#eee" stroke="#222" /><path d="M5 5h10v10H5z" fill="#a8d4ee" stroke="#2b6ea3" strokeWidth="1.500" /></g>,
  bridge: <path d="M2 5l6-4 10 2v13l-4 2V9l-6-1v8l-4-5z" fill="#8ab4dc" stroke="#223" />,
  geo: <path d="M10 1l8 7-3 11H5L2 8z" fill="#d8d8d8" stroke="#888" />,
  flip: <g><path d="M3 6l6-3 4 3-6 3z" fill="#aaa" /><path d="M8 0v5M2 18l6-6 4 1 6-3v5l-6 4z" fill="#4a83c0" stroke="#bcd" /></g>,
  insLoop: <g>{edge(3)}<path d="M10 8h5v6h3l-4 5-4-5h2v-4h-2z" fill="#3f8de0" stroke="#124" strokeWidth="0.600" /></g>,
  remLoop: <g>{edge(3)}<path d="M11 9l7 10M18 9l-7 10" stroke="#e03c28" strokeWidth="2" /></g>,
  triEdit: <g><path d="M2 2l14-1-1 17H2z" fill="#eee" stroke="#222" /><path d="M4 15L13 4" stroke="#444" strokeDasharray="2 1.500" /><path d="M18 9l-6 9-2 2 1-4 5-8z" fill="#f0a030" stroke="#7a3a10" strokeWidth="0.600" /></g>,
  triTurn: <g><path d="M1 1h8v9H1zM10 10h9v9h-9z" fill="#eee" stroke="#222" /><path d="M2 9l6-7M11 11l7 7" stroke="#2b6ea3" /><path d="M12 3h4v5" stroke="#ddd" strokeWidth="1.500" fill="none" /></g>,
  triRe: <g><path d="M2 2l14-1-1 17H2z" fill="#eee" stroke="#222" /><path d="M4 15L13 4" stroke="#444" strokeDasharray="2 1.500" /><circle cx="15" cy="15" r="3.500" fill="none" stroke="#28c23a" strokeWidth="2" /></g>,
  msmooth: <g><path d="M1 1h18v18H1z" fill="#e8ecf2" stroke="#222" /><path d="M10 1v18M1 10h18" stroke="#222" strokeWidth="1.500" /></g>,
  tess: <path d="M1 1h18v18H1zM1 1l18 18M19 1L1 19M10 1v18M1 10h18" fill="#d8d8d8" stroke="#555" />,
  disp: <path d="M1 19v-7l4-3 3-8 3 8 4 2 4-1v9l-2-3-2 3-2-3-2 3-2-3-3 3-2-3z" fill="#d8eefa" stroke="#3a9ad0" />,
};

const RIcon: FC<{ name: string }> = ({ name }) => (
  <svg viewBox="0 0 20 20" className="size-5 shrink-0 overflow-visible" aria-hidden="true">{RICONS[name]}</svg>
);

const RBtn: FC<{ name: string; className?: string; on?: boolean; off?: boolean }> = ({ name, className = "", on, off: disabled }) => (
  <button
    aria-label={name}
    className={`flex h-[27px] items-center justify-center border ${
      on ? "border-[#1266c0] bg-[#b4d6f6]" : disabled ? "border-[#484848] bg-[#5c5c5c]" : "border-[#333] bg-gradient-to-b from-[#6c6c6c] to-[#585858]"
    } ${className}`}
  >
    <RIcon name={name} />
  </button>
);

const RItem: FC<{ name: string; t: string; caret?: boolean; className?: string }> = ({ name, t, caret, className = "" }) => (
  <button className={`flex h-[27px] shrink-0 items-center gap-[7px] whitespace-nowrap ${className}`}>
    <RIcon name={name} />
    <span>{t}</span>
    {caret && <Caret className="ml-1 w-1.5" />}
  </button>
);

const Panel: FC<{ title: string; caret?: boolean; className: string; children: ReactNode }> = ({ title, caret, className, children }) => (
  <section className={`flex shrink-0 flex-col border-r border-[#3a3a3a] bg-[#5b5b5b] ${className}`}>
    <div className="flex flex-1 gap-1.5 pt-1.5">{children}</div>
    <h2 className="mx-0.5 mb-0.5 flex h-5 items-center justify-center gap-2 bg-gradient-to-b from-[#474747] to-[#505050]">
      {title}
      {caret && <Caret className="w-2.5" />}
    </h2>
  </section>
);

const VLine = () => <span className="mb-1 w-px bg-[#3c3c3c]" />;
const Col: FC<{ className?: string; children: ReactNode }> = ({ className = "", children }) => <div className={`flex flex-col gap-1 ${className}`}>{children}</div>;

const Big: FC<{ t: string; children: ReactNode }> = ({ t, children }) => (
  <button className="flex w-[76px] shrink-0 flex-col items-center border-2 border-y border-[#333] bg-gradient-to-b from-[#6c6c6c] to-[#585858] pb-1.5 pt-2">
    <svg viewBox="0 0 40 40" className="size-10">{children}</svg>
    <span className="mt-1">{t}</span>
    <Caret className="mt-auto w-2.5" />
  </button>
);

const Ribbon = () => (
  <div className="flex h-[149px] shrink-0 font-['Noto_Sans','Noto_Sans_CJK_SC',sans-serif] text-[15px] font-normal leading-none text-[#e8e8e8]">
    <Grip tall />
    <div className="flex min-w-0 flex-1 flex-col border-t border-[#777] bg-[#414141]">
      <div className="flex h-6 items-end border-b border-[#2b2b2b] bg-[#515151] pl-[3px] text-[#b8b8b8]">
        <button className="flex h-[22px] w-[68px] items-center justify-end rounded-t border border-b-0 border-[#2f2f2f] bg-[#666] pr-2.5 text-[#eee]">建模</button>
        <button className="flex h-[22px] w-[118px] items-center justify-center">自由形式</button>
        <button className="flex h-[22px] w-[84px] items-center justify-center">选择</button>
        <button className="flex h-[22px] w-[116px] items-center justify-center">对象绘制</button>
        <button className="flex h-[22px] w-[88px] items-center justify-center">填充</button>
        <button aria-label="显示" className="ml-2.5 flex h-[22px] items-center gap-1.5">
          <svg viewBox="0 0 18 11" className="h-[11px] w-[18px]"><rect width="18" height="11" rx="3" fill="#e6e6e6" /><path d="M9 3l4 5H5z" fill="#333" /></svg>
          <Caret className="w-1.5" />
        </button>
      </div>
      <div className="flex min-h-0 flex-1">
        <Panel title="多边形建模" caret className="w-[280px]">
          <Col className="ml-[5px] w-[179px]">
            <div className="flex">
              <RBtn name="vertex" className="flex-1" /><RBtn name="edge" className="flex-1" /><RBtn name="border" className="flex-1" />
              <RBtn name="poly" on className="flex-1" /><RBtn name="element" className="flex-1" />
            </div>
            <p className="flex h-[27px] items-center justify-center">可编辑多边形</p>
            <div className="flex">
              <RBtn name="cubeCur" on className="w-[30px]" /><RBtn name="cubeYel" className="w-[30px]" /><RBtn name="cubeGold" className="w-[30px]" />
              <RBtn name="cubeNet" className="ml-1.5 w-[30px]" /><RBtn name="heat" className="ml-1 flex-1" />
            </div>
          </Col>
          <VLine />
          <Col className="ml-1.5 w-[30px] pt-4"><RBtn name="up" off /><RBtn name="down" off /></Col>
          <Col className="w-[29px]"><RBtn name="bulb" on /><RBtn name="pin" /><RBtn name="tube" /></Col>
        </Panel>
        <Panel title="修改选择" caret className="w-[276px]">
          <Col className="ml-2 w-[65px] pt-4"><RItem name="grow" t="扩大" /><RItem name="shrink" t="收缩" /></Col>
          <Col className="w-[82px]">
            <RItem name="loop" t="循环" className="pl-2.5" />
            <div className="flex"><RBtn name="loopPlus" className="flex-1" /><RBtn name="loopMinus" className="flex-1" /></div>
            <div className="flex">
              <RBtn name="loopFlash" className="w-[38px]" /><RBtn name="loopDot" className="w-[29px]" />
              <button aria-label="更多" className="flex w-[15px] items-center justify-center border border-[#333]"><Caret className="w-1.5" /></button>
            </div>
          </Col>
          <span className="-mr-0.5 w-0.5" />
          <VLine />
          <Col className="w-[76px]">
            <RItem name="ring" t="光环" className="pl-2.5" />
            <div className="flex"><RBtn name="ringPlus" off className="flex-1" /><RBtn name="ringMinus" off className="flex-1" /></div>
            <div className="flex"><RBtn name="ringFlash" className="flex-1" /><RBtn name="ringOff" off className="flex-1" /></div>
          </Col>
        </Panel>
        <Panel title="编辑" className="w-[388px]">
          <Col className="ml-2.5 w-11 pt-1">
            <div className="flex"><RBtn name="lock" className="w-[30px]" /><button aria-label="更多" className="flex flex-1 items-center justify-center border border-[#333]"><Caret className="w-1.5" /></button></div>
            <RBtn name="paint" />
            <div className="flex h-5 items-center border border-[#333] bg-[#666] pr-1"><input aria-label="数量" defaultValue="1" className="w-full min-w-0 bg-transparent pl-1 outline-none" /><Arrows /></div>
          </Col>
          <VLine />
          <Col className="ml-1.5">
            <div className="flex">
              <RItem name="redo" t="重复" className="w-[74px]" />
              <button className="flex h-[27px] w-[108px] items-center gap-2 border border-[#1266c0] bg-[#b4d6f6] pl-1 text-[#dcdcdc]"><RIcon name="knife" /><span>快速切片</span></button>
              <RItem name="quickLoop" t="快速 循环" className="ml-1" />
            </div>
            <div className="flex">
              <RItem name="nurms" t="NURMS" className="w-[104px]" />
              <RItem name="cut" t="剪切" className="w-[92px]" />
              <RItem name="paint" t="绘制连接" caret />
            </div>
            <div className="flex items-center pl-[19px]">
              <span className="w-[42px]">约束:</span>
              <RBtn name="conNone" on className="w-8" /><RBtn name="conEdge" className="w-8" /><RBtn name="conFace" className="w-8" /><RBtn name="conNorm" className="w-8" />
            </div>
          </Col>
        </Panel>
        <Panel title="几何体(全部)" caret className="w-[170px]">
          <Col className="ml-2 w-[83px]"><RItem name="relax" t="松弛" caret /><RItem name="attach" t="附加" caret /><RItem name="detach" t="分离" /></Col>
          <Col><RItem name="create" t="创建" /><RItem name="collapse" t="塌陷" /></Col>
        </Panel>
        <Panel title="多边形" caret className="w-[210px]">
          <Col className="ml-2 w-[85px]"><RItem name="extrude" t="挤出" caret /><RItem name="bevel" t="倒角" caret /><RItem name="inset" t="插入" caret /></Col>
          <Col><RItem name="bridge" t="桥" caret /><RItem name="geo" t="几何多边形" /><RItem name="flip" t="翻转" /></Col>
        </Panel>
        <Panel title="循环" caret className="w-[75px]">
          <Col className="ml-1.5 pt-4"><RItem name="insLoop" t="插入" /><RItem name="remLoop" t="移除" /></Col>
        </Panel>
        <Panel title="三角剖分" className="w-[135px]">
          <Col className="ml-1.5"><RItem name="triEdit" t="编辑" /><RItem name="triTurn" t="旋转" /><RItem name="triRe" t="重复三角算法" /></Col>
        </Panel>
        <Panel title="细分" className="w-[120px]">
          <Col className="ml-1.5"><RItem name="msmooth" t="网格平滑" caret /><RItem name="tess" t="细化" caret /><RItem name="disp" t="使用置换..." /></Col>
        </Panel>
        <Big t="可见性">
          <path d="M3 10l10-8 14 4v20l-10 8-14-5z" fill="#7fb55f" stroke="#3f6e28" /><path d="M3 10l13 4 11-8M16 14v19" fill="none" stroke="#bfe2a8" />
          <circle cx="31" cy="22" r="6" fill="#b9c9da" stroke="#445" /><path d="M28 28h6v9h-6z" fill="#777" />
        </Big>
        <Big t="对齐">
          <path d="M0 20h40" stroke="#aaa" strokeWidth="1.500" /><path d="M14 13l11-12v26L14 39z" fill="#a8d8f4" stroke="#3a8fd0" strokeWidth="1.500" /><path d="M19 16l4 4-4 4-4-4z" fill="#222" />
        </Big>
        <Big t="属性">
          <path d="M2 1h36v36H2z" fill="#dcdcdc" stroke="#333" /><path d="M2 1h36v4H2z" fill="#445566" />
          <path d="M2 10h36M2 15h36M2 20h36M2 25h36M2 31h36M8 5v32M13 5v32M18 5v32M23 5v32M28 5v32M33 5v32" stroke="#999" />
          <path d="M20 21h19v17H20z" fill="#eef4fa" stroke="#333" /><path d="M20 21h19v3H20z" fill="#777" /><path d="M23 28h4v3h-4zM29 29h6M29 34h6M23 33h4v3h-4z" fill="#3f9be8" stroke="#3f9be8" />
        </Big>
      </div>
    </div>
  </div>
);

const WINDOWS: number[][] = [];
[[530, 570], [603, 643], [676, 743], [777, 844]].forEach(([top, bottom], row) => {
  [[50, 102], [176, 235], [333, 363], [406, 436], [496, 526], [569, 605]].forEach(([l, r], col) => {
    if (row < 3 || col < 4) WINDOWS.push([l, top, r - l, bottom - top]);
  });
  WINDOWS.push([670, top, 71, bottom - top], [815, top, 71, bottom - top]);
});
WINDOWS.push([259, 797, 30, 65], [900, 797, 29, 65], [1111, 797, 29, 65]);

const Viewport = () => (
  <div className="relative min-w-0 flex-1 overflow-hidden border-2 border-[#7f6a28] bg-[#343434]">
    <svg viewBox="57 370 1175 580" preserveAspectRatio="xMidYMid slice" className="absolute inset-0 h-full w-full" shapeRendering="crispEdges">
      <path d="M0 513h1400v361H0z" fill="#da3333" />
      <path d="M0 513.500h1400M0 874.500h1400" stroke="#d40000" />
      {WINDOWS.map(([x, y, w, h]) => (
        <rect key={`${x}-${y}`} x={x + 0.5} y={y + 0.5} width={w} height={h} fill="none" stroke="#8e0505" />
      ))}
      <path d="M741.500 513v361M815.500 513v361M886.500 513v361" stroke="#cf0000" />
      <path d="M668.500 530v312" stroke="#c9a3a3" strokeDasharray="8 8" />
      <path d="M670.500 528v316M669.500 844v11M660 844.500h19" stroke="#00f000" />
      <path d="M670.500 526l3 7h-6z" fill="#00f000" />
      <path d="M727.500 570v122" stroke="#84606a" />
      <path d="M735 693.500h117" stroke="#b82222" />
      <g fontFamily="Liberation Sans" fontSize="14" fontWeight="700" fill="#6e5a5a">
        <text x="727" y="571">y</text><text x="727" y="696">z</text><text x="852" y="696" fill="#96292c">x</text>
      </g>
      <path d="M81.500 900v24" stroke="#0000c8" /><path d="M88 924.500h20" stroke="#c80000" />
      <g fontFamily="Liberation Sans" fontSize="14">
        <text x="82" y="903" fill="#0000d8">z</text><text x="82" y="927" fill="#00a000">y</text><text x="107" y="928" fill="#d00000">x</text>
      </g>
    </svg>
    <div className="relative flex items-center gap-1.5 pl-1 pt-2 text-[13px] leading-5 text-[#ccc]">
      {["[+]", "[前]", "[标准]", "[线框]"].map((t) => <button key={t}><Mix t={t} latin="text-xs" /></button>)}
      <button aria-label="过滤" className="ml-1.5"><svg viewBox="0 0 16 16" className="size-4"><path d="M0 1h16l-6 7v7l-4-1V8z" fill="#666" /></svg></button>
    </div>
  </div>
);

const Dock = () => (
  <aside className="w-[55px] shrink-0 text-center text-[16px] text-[#ececec]">
    <GripH className="ml-0.5 mr-2 mt-0.5" />
    <svg viewBox="0 0 40 40" className="ml-[5px] mt-2.5 size-10">
      <circle cx="20" cy="20" r="20" fill="#858585" /><path d="M8 14l12-4 12 4-12 5z" fill="#fff" /><path d="M8 16l11 5v12L9 27zM32 16l-11 5v12l10-6z" fill="#fff" />
    </svg>
    <button className="mt-1 flex h-10 w-[50px] items-center justify-center font-['Noto_Sans',sans-serif] text-sm font-normal text-[#5f91d8]">RDF3</button>
    {["渲染", "文件", "编辑", "选择", "显示", "变换", "动画", "模型", "室内"].map((t, i) => (
      <button key={t} className={`flex w-[50px] items-center justify-center ${i % 2 ? "h-[37px]" : "h-[38px]"}`}>{t}</button>
    ))}
  </aside>
);

const FloatBar = () => (
  <div className="absolute bottom-0 left-0 w-16">
    <div className="ml-2.5 flex w-[42px] flex-col items-center gap-2 overflow-hidden border border-[#383838] bg-[#474747] pb-[14px] pt-1">
      <GripH className="w-9" />
      <button aria-label="D5" className="-mt-1 flex h-[38px] w-[38px] items-center justify-center rounded-md bg-[#393939]">
        <svg viewBox="0 0 28 28" className="size-7"><circle cx="13" cy="13" r="12.500" fill="#4b49f2" /><path d="M1 17a12.500 12.500 0 0 0 24 0z" fill="#7a38f0" /><path d="M9 8h6l3 3-1 7H9z" fill="none" stroke="#fff" strokeWidth="2.600" /><path d="M20 17l8 5-8 5z" fill="#7b3ff0" /></svg>
      </button>
      <svg viewBox="0 0 30 30" className="size-8"><path d="M3 15q12-20 24 0q-12 18-24 0z" fill="none" stroke="#565656" strokeWidth="2" /><circle cx="15" cy="15" r="4" fill="#5c5c5c" /></svg>
      <svg viewBox="0 0 30 30" className="size-8"><path d="M1 8h22v14H1zM25 13l5-3v9l-5-2z" fill="#595959" /></svg>
      <svg viewBox="0 0 30 30" className="size-8"><path d="M1 7h8l2-3h8l2 3h5v14H1z" fill="#555" /><circle cx="14" cy="13" r="6" fill="#1e1e1e" /><circle cx="12" cy="11" r="2" fill="#555" /><path d="M20 18h5v-3l5 5-5 5v-3h-5z" fill="#777" /></svg>
    </div>
    <div className="flex h-[25px] items-center gap-5 bg-white pl-4">
      <svg viewBox="0 0 20 20" className="size-5"><circle cx="10" cy="10" r="10" fill="#12b886" /><path d="M7 16V10h6q3-1 2-4t-4-2H4" fill="none" stroke="#fff" strokeWidth="2.400" /></svg>
      <svg viewBox="0 0 12 20" className="h-5 w-3"><rect x="1" y="2" width="9" height="5" rx="2.500" fill="none" stroke="#555" strokeWidth="1.500" /><path d="M1 14v5h9v-5" fill="none" stroke="#222" strokeWidth="2.600" /></svg>
    </div>
  </div>
);

const Coord: FC<{ axis: string; value: string }> = ({ axis: a, value }) => (
  <label className="mr-3.5 flex shrink-0 items-center gap-0.5 text-[13px]">
    {a}:
    <input defaultValue={value} className="h-[23px] w-[74px] border border-[#3f3f3f] bg-[#595959] pl-0.5 text-[13px] text-[#8f8f8f]" />
  </label>
);

const Status = () => (
  <footer className="flex h-[66px] shrink-0 whitespace-nowrap pt-[5px] text-[15px] leading-none text-[#ececec]">
    <div className="ml-1 w-[122px] shrink-0">
      <div className="h-7 border-2 border-[#888] border-b-white border-r-white bg-[#dcc4c4]" />
      <div className="mt-0.5 flex h-7 items-start justify-end border-2 border-[#888] border-b-white border-r-white bg-white pr-0.5 pt-0.5 text-[#0000e0]"><Mix t="代码说明:1" /></div>
    </div>
    <span className="ml-1 mr-2 h-full border-r border-[#1d1d1d]" />
    <div className="flex min-w-0 flex-1 flex-col gap-px">
      <div className="flex h-8 items-center">
        <p className="min-w-0 flex-1"><Mix t="选择了 1 个 对象" /></p>
        <button aria-label="隔离" className="flex h-[26px] w-[27px] shrink-0 items-center justify-center rounded bg-[#5a86c0]">
          <svg viewBox="0 0 20 20" className="size-5"><path d="M1 6V1h5M14 1h5v5M19 14v5h-5M6 19H1v-5" fill="none" stroke="#eee" strokeWidth="1.600" /><path d="M6 6h8v8H6z" fill={C} stroke={D} /></svg>
        </button>
        <svg viewBox="0 0 14 20" className="ml-3 h-5 w-3.5 shrink-0"><path d="M1 9h12v10H1z" fill={G} /><path d="M3 9V5q4-7 8 0v4" fill="none" stroke={G} strokeWidth="2" /><path d="M6 12h2v4H6z" fill={D} /></svg>
        <svg viewBox="0 0 18 18" className="ml-[17px] mr-2.5 size-[18px] shrink-0"><path d="M1 1h16v16H1z" fill={G} /><circle cx="9" cy="9" r="3.500" fill="none" stroke={D} strokeWidth="2" /><path d="M3 6V3h3M12 3h3v3M15 12v3h-3M6 15H3v-3" stroke={D} fill="none" strokeWidth="1.500" /></svg>
        <Coord axis="X" value="10.295m" /><Coord axis="Y" value="-12.737m" /><Coord axis="Z" value="-38.463m" />
        <span className="ml-1">栅格</span>
        <span className="-mr-2 ml-1.5 text-[13px]">=</span>
      </div>
      <div className="flex h-[31px] items-center gap-1.5">
        <p className="min-w-0 flex-1"><Mix t="顶点 捕捉 图形005 的坐标位置:  [10.295m, -12.737m, -38.463m]" /></p>
        <span className="h-5 w-px bg-black" />
        <button aria-label="安全" className="flex h-[25px] w-6 items-center justify-center rounded bg-[#666]"><svg viewBox="0 0 14 16" className="h-4 w-3.5"><path d="M1 2l6-2 6 2v7q-1 5-6 7q-5-2-6-7z" fill={G} /><path d="M7 0l6 2v6H7zM1 8h6v8q-5-2-6-7z" fill="#777" /></svg></button>
        <span>禁用:</span>
        <span className="size-2.5 rounded-full bg-[#ff5050]" />
        <button className="flex h-[25px] w-6 items-center justify-center rounded bg-[#666]"><span className="flex size-4 items-center justify-center rounded-full bg-white text-xs font-bold text-[#333]">0</span></button>
        <span className="h-5 w-px bg-black" />
        <button aria-label="标记" className="flex h-[25px] w-[26px] shrink-0 items-center justify-center rounded bg-[#5a86c0]"><svg viewBox="0 0 18 18" className="size-[18px]"><path d="M2 5l7-4 7 4v8l-7 4-7-4zM2 5l7 4 7-4M9 9v8M5 7v8M13 7v8" fill="none" stroke="#e0e0e0" strokeWidth="1.300" /></svg></button>
        <button className="z-10 -mr-11 bg-[#444] leading-[22px]">添加时间标记</button>
      </div>
    </div>
  </footer>
);

const R = "flex min-h-0 flex-1 gap-[3px]";

const NaviPanel = () => (
  <aside className="flex w-[138px] shrink-0 flex-col gap-1 pl-2.5 pr-[5px] text-[15px]">
    <GripH className="mt-[5px] shrink-0" />
    <div className="mt-0.5 flex h-5 shrink-0 items-start justify-between">
      <h2 className="w-[100px] overflow-hidden text-[13px] leading-6 text-white">AutoNaviTTool</h2>
      <Btn t="x" className="mt-1 h-[17px] w-4" />
    </div>
    <div className={R}>
      <Btn t="物体命名" className="flex-1" />
      <svg viewBox="0 0 25 25" className="-mr-px h-full w-[25px] bg-[#636363]"><path d="M0 0h16l-6 4-4 6-6 6zM25 0v10l-6-2-2-4zM0 17h13l2 8H0z" fill="#ddd" /></svg>
    </div>
    {["优化材质", "** 优化材质 **"].map((t) => <div key={t} className={R}><Btn t={t} className="flex-1" /><Btn t="v" className="w-2.5" /></div>)}
    {["命名材质贴图", "清除光滑组", "游离点和空物体", "清空材质球"].map((t) => <div key={t} className={R}><Btn t={t} className="flex-1" /><Btn t="" className="w-2" /></div>)}
    <div className={R}><Btn t="坐标归零" className="flex-1" /><Btn t="中" className="w-[21px]" /><Btn t="底" className="w-[21px]" /><Btn t="" className="w-2" /></div>
    {["材质贴图检查", "导出USX"].map((t) => <div key={t} className={R}><Btn t={t} className="flex-1" /><Btn t="" className="w-2" /></div>)}
    <div className="h-[9px] shrink-0 border-l border-t-2 border-black" />
    {["焊点", "展UV"].map((t) => <div key={t} className={R}><Btn t={t} className="flex-1" /><Btn t="" className="w-2" /></div>)}
    {["去除贴图", "选择无贴图的面", "选择同ID的面"].map((t) => <div key={t} className={R}><Btn t={t} className="flex-1" /></div>)}
    <div className="flex h-[18px] shrink-0 gap-[3px]">
      <Btn t="?" className="w-[18px]" /><Btn t="<" className="w-3" />
      <button aria-label="锁定" className="flex w-[19px] items-center justify-center rounded bg-[#555]"><svg viewBox="0 0 14 16" className="h-4 w-3.5"><path d="M3 8V4q4-6 8 0v4" fill="none" stroke="#ddd" strokeWidth="2" /><path d="M1 7h12v9H1z" fill="#f3dfb4" stroke="#333" /><path d="M6 10h2v4H6z" fill="#000" /></svg></button>
      <Btn t=">" on className="w-3" /><Btn t=">>>>>" className="flex-1" />
    </div>
    <div className={R}>{["1", "2", "3", "4"].map((t) => <Btn key={t} t={t} className="flex-1" />)}</div>
    <div className="flex h-1.5 shrink-0"><Btn t="v" className="flex-1" /></div>
    {[["Breake", "Extrude"], ["Weld", "T Weld"], ["Connect", "Chamfer"], ["Bridge", "Cut"], ["MakePla", "Slice"]].map(([a, b]) => (
      <div key={a} className={`${R} last:-mb-1`}><Btn t={a} className="flex-1 basis-0" /><Btn t={b} className="flex-1 basis-0" /></div>
    ))}
  </aside>
);

const Check: FC<{ t: string; on?: boolean; dim?: boolean; className?: string }> = ({ t, on, dim, className = "" }) => (
  <label className={`flex h-6 shrink-0 items-center gap-1.5 ${dim ? "text-[#8c8c8c]" : "text-white"} ${className}`}>
    <span className="relative flex size-4">
      <input type="checkbox" defaultChecked={on} className={`size-4 appearance-none border ${dim ? "border-[#464646] bg-[#595959]" : "border-[#484848] bg-[#646464]"}`} />
      {on && <svg viewBox="0 0 16 16" className="pointer-events-none absolute inset-0 size-4"><path d="M3 8l3 4 7-8" stroke="#aaa" strokeWidth="2.500" fill="none" /></svg>}
    </span>
    {t}
  </label>
);

const TAB_ICONS: ReactNode[] = [
  <path d="M9 2h4v8h8v4h-8v8H9v-8H1v-4h8z" fill="#999" />,
  <g fill="none" stroke={C} strokeWidth="1.800"><path d="M3 3h16v16H3z" /><path d="M4 18Q6 7 18 5" stroke={G} /><path d="M1 1h4v4H1zM17 1h4v4h-4zM1 17h4v4H1zM17 17h4v4h-4z" fill="#3c3c3c" /></g>,
  <g><path d="M3 1h16v7H3z" fill="#999" /><path d="M11 8v4M4 17v-5h14v5" stroke="#3f8b8b" fill="none" strokeWidth="1.500" /><path d="M1 17h5v5H1zM16 17h5v5h-5z" fill="#3f9b9b" /></g>,
  <g><circle cx="8" cy="11" r="8" fill="none" stroke="#3f8b8b" strokeWidth="1.500" /><circle cx="11" cy="11" r="8" fill="none" stroke="#3f8b8b" strokeWidth="1.500" /><circle cx="14" cy="11" r="8.500" fill="#999" /></g>,
  <g fill="#999"><path d="M1 3h20v12H1zM6 19h10v2H6zM9 15h4v3H9z" /></g>,
  <path d="M1 4l4 2 1-4q5 0 5 6l10 10q0 4-3 3L8 11Q2 11 1 4z" fill="#a5a5a5" />,
];

const dimRow = "flex h-[26px] shrink-0 items-center";

const CommandPanel = () => (
  <section className="flex min-h-0 flex-1 flex-col text-[15px] leading-none">
    <div className="mt-1 flex gap-1.5"><GripH className="ml-1.5 flex-1" /></div>
    <div className="ml-[5px] mr-1 mt-1.5 flex h-[35px] shrink-0 bg-[#393939]">
      {TAB_ICONS.map((ic, i) => (
        <button key={i} aria-label={["创建", "修改", "层次", "运动", "显示", "实用程序"][i]} className={`flex w-10 items-center justify-center ${i === 1 ? "bg-[#444]" : "border-r border-[#303030]"}`}>
          <svg viewBox="0 0 22 22" className="size-[22px] overflow-visible">{ic}</svg>
        </button>
      ))}
    </div>
    <div className="flex min-h-0 flex-1 pt-1.5">
      <div className="flex w-[222px] shrink-0 flex-col pl-2">
        <div className="flex gap-[5px]">
          <input aria-label="名称" defaultValue="图形006" className="h-[25px] w-[184px] border border-[#3a3a3a] bg-[#646464] pl-2 text-[15px] text-white" />
          <button aria-label="颜色" className="h-[25px] w-[25px] border-2 border-black bg-[#bcab33]" />
        </div>
        <Combo label="修改器列表" value="修改器列表" className="mt-1.5 h-[23px]" text="pl-0.5 text-[15px]" />
        <div className="mt-[15px] grid grid-cols-2 gap-x-1.5 gap-y-[5px] pl-[3px] pr-1">
          <Btn t="FFD 2x2x2" className="h-[23px]" /><Btn t="挤出" dim className="h-[23px]" />
          <Btn t="扫描" dim className="h-[23px]" /><Btn t="多边形选择" className="h-[23px]" />
          <Btn t="体积选择" className="h-[23px]" /><Btn t="FFD 选择" dim className="h-[23px]" />
          <Btn t="曲面选择" dim className="h-[23px]" />
        </div>
        <div className="mt-2 h-[135px] border-2 border-white bg-[#444]">
          <button className="flex h-[22px] w-full items-center border-b border-[#777] pl-2 text-white">
            <svg viewBox="0 0 6 10" className="mr-3 h-2.5 w-1.5"><path d="M0 0l6 5-6 5z" fill="#ddd" /></svg>
            <span className="flex h-5 flex-1 items-center border border-[#4f7cc0]">可编辑多边形</span>
            <span className="-ml-5 mr-[7px] size-[13px] bg-[#d4d4d4]" />
          </button>
        </div>
        <div className="flex h-10 items-center justify-between pl-1.5 pr-7">
          <svg viewBox="0 0 20 20" className="size-5"><path d="M1 19l7-8-3-3 6-1 4-6 4 4-6 4-1 6-3-3z" fill={G} /></svg>
          <span className="h-4 w-px bg-black" />
          <svg viewBox="0 0 8 22" className="h-[22px] w-2"><path d="M0 0h8v2H0zM1 2h6v19H1z" fill="#666" stroke={G} /><path d="M2 11h4v9H2z" fill={C} /></svg>
          <span className="h-4 w-px bg-black" />
          <svg viewBox="0 0 24 24" className="size-6" fill="#4b4b4b" stroke={offL} strokeWidth="1.500"><circle cx="6" cy="6" r="5" /><circle cx="18" cy="18" r="5" /><circle cx="13" cy="18" r="5" /><path d="M11 6h8v6M16 10l3 3 3-3" fill="none" /></svg>
          <svg viewBox="0 0 18 24" className="h-6 w-[18px]" fill="#4b4b4b" stroke={offL} strokeWidth="1.500"><path d="M2 6h14v17H2zM0 3h18v3H0zM6 1h6v2H6z" /><path d="M6 9v11M9 9v11M12 9v11" strokeWidth="2" /></svg>
          <span className="h-4 w-px bg-black" />
          <svg viewBox="0 0 24 24" className="size-6"><path d="M1 2h17v21H1z" fill={G} /><path d="M3 4h13v2H3zM3 9h5v5H3zM11 9h5v5h-5zM3 16h5v5H3zM11 16h5v5h-5z" fill="none" stroke={D} strokeWidth="1.300" /><path d="M22 1l2 2-9 9-3 1 1-3z" fill={O} /></svg>
        </div>
        <div className="mt-5 flex items-center gap-2.5 px-2"><span className="h-px flex-1 bg-[#6a6a6a]" /><GripH className="w-3" /><span className="h-px flex-1 bg-[#6a6a6a]" /></div>
        <div className="mb-0.5 mt-1.5 flex min-h-0 flex-1 gap-1">
          <div className="flex min-w-0 flex-1 flex-col overflow-hidden rounded-b border border-[#3d3d3d] bg-[#515151] px-1.5">
            <div className="mt-2 flex shrink-0 items-center gap-1 pl-2">
              <Btn t="环形" dim className="h-[21px] w-[67px]" /><span className="flex h-5 w-[15px] items-center justify-center border border-[#464646]"><Arrows /></span>
              <Btn t="循环" dim className="ml-1 h-[21px] w-[67px]" /><span className="flex h-5 w-[15px] items-center justify-center border border-[#464646]"><Arrows /></span>
            </div>
            <fieldset className="mt-1.5 flex shrink-0 justify-between rounded border border-[#3b3b3b] pb-1 pr-1 pt-0.5 text-white">
              <legend className="ml-1.5">预览选择</legend>
              {["禁用", "子对象", "多个"].map((t, i) => (
                <label key={t} className="flex h-6 items-center gap-1">
                  <input type="radio" name="preview" defaultChecked={i === 0} className="size-4 appearance-none rounded-full border-[3px] border-[#646464] bg-[#646464] checked:bg-[#e4e4e4]" />
                  {t}
                </label>
              ))}
            </fieldset>
            <p className="mt-2.5 pr-3.5 text-right text-white"><Mix t="选择了 8 个多边形" /></p>
          </div>
          <div className="flex w-1.5 flex-col rounded bg-[#383838] pt-[68px]"><span className="flex-1 rounded bg-[#5a5a5a]" /></div>
        </div>
      </div>
      <div className="flex min-w-0 flex-1 flex-col overflow-hidden rounded-t border-l border-t border-[#3f3f3f] bg-[#515151] px-3">
        <h2 className="-ml-1 flex h-[22px] shrink-0 items-center gap-2 font-bold text-white"><Caret />软选择<span className="ml-auto h-[7px] w-2 border-y-2 border-dotted border-[#888]" /></h2>
        <Check t="使用软选择" className="mt-1.5 pl-1.5" />
        <div className="flex shrink-0 items-center justify-between pl-[11px] pr-1.5"><Check t="边距离:" dim /><Spin label="边距离" value="1" className="w-[50px]" /></div>
        <Check t="影响背面" on dim className="pl-[11px]" />
        {[["衰减:", "20.0m"], ["收缩:", "0.0"], ["膨胀:", "0.0"]].map(([t, v]) => (
          <div key={t} className={`${dimRow} pl-8 text-[#8c8c8c]`}><Mix t={t} /><Spin label={t} value={v} className="ml-0.5 w-[82px]" /></div>
        ))}
        <svg viewBox="0 0 140 98" className="mx-auto mt-2.5 h-[98px] w-[141px] shrink-0 border-l-2 border-t-2 border-black bg-white">
          <path d="M0 18h140M0 78h140M70 0v98" stroke="#e8e8e8" strokeDasharray="3 2" />
          <path d="M2 78Q18 76 34 53Q55 19 70 19T106 53Q122 76 138 78" fill="none" stroke="#000" strokeWidth="1.200" />
        </svg>
        <div className="mt-1.5 flex shrink-0 justify-between pl-1 pr-2 text-[13px] leading-5 text-white"><span>20.0m</span><span>0.0m</span><span>20.0m</span></div>
        <Btn t="明暗处理面切换" dim className="mr-1.5 mt-0.5 h-[22px] shrink-0" />
        <Check t="锁定软选择" dim className="mt-2.5 pl-1.5" />
        <fieldset className="-ml-0.5 mr-0.5 mt-1 flex shrink-0 flex-col rounded border border-[#3b3b3b] px-2.5 text-[#8c8c8c]">
          <legend className="-ml-1 px-0.5">绘制软选择</legend>
          <div className="mt-2.5 flex shrink-0 gap-1.5 pr-0.5"><Btn t="绘制" dim className="h-[22px] flex-1" /><Btn t="模糊" dim className="h-[22px] flex-1" /></div>
          <Btn t="复原" dim className="mb-1.5 mt-1.5 h-[22px] shrink-0" />
          {[["选择值", "1.0"], ["笔刷大小", "20.0m"], ["笔刷强度", "1.0"]].map(([t, v]) => (
            <div key={t} className={`${dimRow} justify-between`}>{t}<Spin label={t} value={v} className="w-[66px]" /></div>
          ))}
        </fieldset>
      </div>
      <div className="mb-px ml-1 mr-2 w-[7px] rounded bg-[#383838]"><span className="block h-[105px] rounded bg-[#5c5c5c]" /></div>
    </div>
  </section>
);

const Playback = () => (
  <div className="relative flex h-[68px] shrink-0 gap-1.5 pt-[9px] text-[15px]">
    <div className="flex w-[118px] flex-col gap-[5px]">
      <svg viewBox="0 0 118 24" className="h-6 w-[118px]" fill={G}>
        <path d="M0 12l5-6v12zM8 5h3v14H8zM13 5h3v14h-3zM27 3l15 9-15 9zM53 5h3v14h-3zM58 5h3v14h-3zM64 6l8 6-8 6zM85 6l7 6-7 6zM92 6l7 6-7 6zM100 4h3v16h-3zM47 19v5h-5z" />
        <path d="M78 3v18" stroke="#1d1d1d" strokeWidth="1.500" />
      </svg>
      <div className="flex items-center gap-1.5">
        <div className="flex h-[21px] w-[80px] items-center border border-l-0 border-[#3a3a3a] bg-[#646464] pr-1"><input aria-label="帧" defaultValue=")" className="w-full min-w-0 bg-transparent text-[13px] text-[#ddd] outline-none" /><Arrows /></div>
        <svg viewBox="0 0 28 28" className="size-5 overflow-visible"><circle cx="13" cy="11" r="11" fill={G} /><path d="M13 4v8h6" stroke={D} strokeWidth="2" fill="none" />{gear(21, 21)}</svg>
      </div>
    </div>
    <button aria-label="设置关键点" className="flex h-[54px] w-[50px] items-center justify-center rounded bg-[#636363]">
      <svg viewBox="0 0 36 36" className="size-9"><path d="M13 1h7v13h13v6H20v13h-7V20H0v-6h13z" fill={G} /><path d="M20 30l12-11M30 21l3 3M27 24l3 3" stroke={C} strokeWidth="2.500" /><circle cx="20" cy="31" r="3.500" fill="none" stroke={C} strokeWidth="2.500" /></svg>
    </button>
    <div className="-ml-0.5 flex w-[82px] flex-col gap-0.5"><Btn t="自动" className="h-[26px]" /><Btn t="设置关键点" className="h-[26px]" /></div>
    <div className="flex w-[139px] flex-col gap-1.5">
      <Combo label="关键点对象" value="选定对象" className="h-[22px]" />
      <div className="flex items-center justify-between">
        <svg viewBox="0 0 24 22" className="h-[22px] w-6"><path d="M3 21Q9 16 8 4M21 21Q15 16 16 4" fill="none" stroke={C} strokeWidth="2.400" /><circle cx="3" cy="4" r="2" fill={G} /><circle cx="21" cy="4" r="2" fill={G} /><path d="M9 1h6v6H9z" fill="#444" stroke={G} strokeWidth="1.500" /></svg>
        <Btn t="过滤器..." className="h-[26px] w-[107px]" />
      </div>
    </div>
    <svg viewBox="0 0 44 18" className="absolute bottom-0 right-[62px] h-[18px] w-11"><path d="M0 14L2 1l12 5q8-3 16 0L42 1l2 13v4H0z" fill="#333" /><path d="M2 3l8 5-7 6zM42 3l-8 5 7 6z" fill="#3ff0b0" /><path d="M7 18q3-11 15-11t15 11z" fill="#fff" /><path d="M14 18q8-6 16 0z" fill="#8fe8e0" /></svg>
    <div className="ml-auto flex flex-col gap-2.5 pt-0.5">
      <svg viewBox="0 0 20 20" className="size-5"><circle cx="13" cy="7" r="6" fill="none" stroke={G} strokeWidth="2" /><path d="M8 12l-7 7" stroke={G} strokeWidth="3" /></svg>
      <svg viewBox="0 0 20 20" className="size-5"><path d="M1 1h18v16H1z" fill="none" stroke={G} strokeDasharray="4 2" strokeWidth="1.500" /><circle cx="11" cy="10" r="4.500" fill="none" stroke={C} strokeWidth="2" /><path d="M8 13l-6 6" stroke={C} strokeWidth="2.500" /></svg>
    </div>
  </div>
);

const SCRIPTS = [
  ["添加", "添加列表", "加点", "焊接", "强制焊接", "连接", "扩边", "修剪", "延伸", "等分面板", "自动等分", "分离", "规格化", "优化"],
  ["视图", "选择", "HFI", "属性", "MRS", "堆栈", "组", "装载", "塌陷", "图形", "材质", "清理", "修改", "工具", "高级", "其它"],
];

const ScriptPanel = () => (
  <aside className="flex w-[102px] shrink-0 flex-col text-[15px]">
    <GripH className="mt-1" />
    <div className="mt-1.5 flex min-h-0 flex-1 flex-col border-l border-t border-[#a8a8a8]">
      <div className="flex flex-1 gap-[3px] pl-px pt-px">
        <div className="flex w-[67px] shrink-0 flex-col gap-[5px]">{SCRIPTS[0].map((t) => <Btn key={t} t={t} className="h-6 shrink-0" />)}</div>
        <div className="flex min-w-0 flex-1 flex-col gap-[5px]">
          {SCRIPTS[1].map((t) => <Btn key={t} t={t} on={t === "图形"} className="h-6 shrink-0 rounded-r-none border-r-0" />)}
        </div>
      </div>
      <div className="relative flex gap-1 pl-px">
        <Btn t="A" className="h-[18px] flex-1" /><Btn t="T" className="h-[18px] flex-1" /><Btn t="C" className="h-[18px] flex-1" />
        <svg viewBox="0 0 22 22" className="absolute left-[34px] top-1.5 size-[22px] bg-[#3c3c3c]"><path d="M1 5V1h4M17 1h4v4M21 17v4h-4M5 21H1v-4" fill="none" stroke={G} strokeWidth="1.500" /><path d="M11 3l7 4v8l-7 4-7-4V7z" fill={C} /><path d="M4 7l7 4 7-4M11 11v8" fill="none" stroke="#26696c" /></svg>
      </div>
      <div className="mt-1.5 flex items-start justify-between pl-[5px]">
        <label className="mt-1.5 flex items-center gap-1.5 text-[13px] leading-4 text-white"><input type="checkbox" className="size-[15px] appearance-none border border-[#3d3d3d] bg-[#646464]" />UI</label>
        <Combo label="单位" value="米" className="h-[22px] w-[51px]" text="pl-1 text-[15px]" />
      </div>
      <div className="mx-2 mt-3 h-1.5 rounded-t border-t-4 border-[#666] bg-white" />
    </div>
  </aside>
);

const App: FC = () => (
  <div className={`relative flex h-screen flex-col overflow-hidden bg-[#444] ${CJK}`}>
    <Header />
    <ToolRows />
    <Ribbon />
    <div className="flex min-h-0 flex-1">
      <main className="flex min-w-0 flex-1 flex-col">
        <div className="flex min-h-0 flex-1 pt-0.5"><Dock /><Viewport /></div>
        <Status />
      </main>
      <NaviPanel />
      <div className="flex w-[445px] shrink-0 flex-col"><CommandPanel /><Playback /></div>
      <ScriptPanel />
    </div>
    <FloatBar />
  </div>
);

export default App;
